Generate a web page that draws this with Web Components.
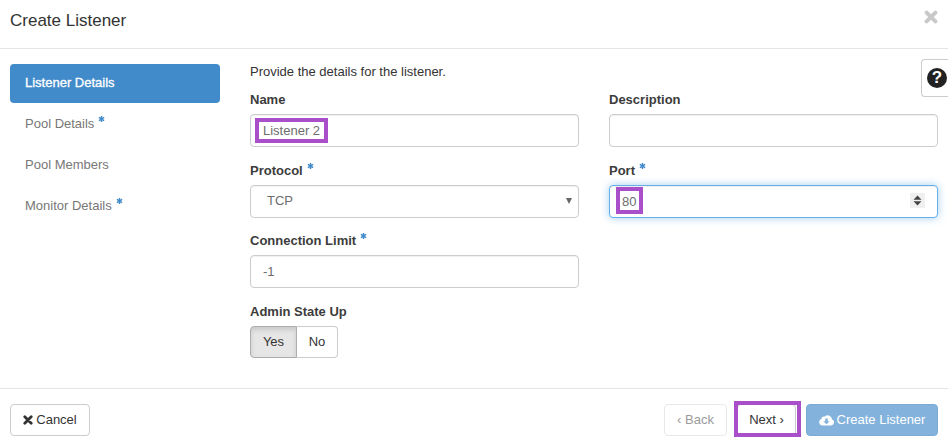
<!DOCTYPE html>
<html>
<head>
<meta charset="utf-8">
<title>Create Listener</title>
<style>
  html, body { margin: 0; padding: 0; background: #fff; }
  body { font: 13px/20px "Liberation Sans", Arial, sans-serif; color: #333; width: 948px; height: 443px; overflow: hidden; }
</style>
</head>
<body>
<template id="field-tpl">
  <style>
    :host { display: block; }
    .lbl { display: block; height: 20px; padding-top: 1px; margin-bottom: 4px; line-height: 20px; color: #3c3c3c; font-weight: 700; }
    .req { display: none; width: 7px; height: 8px; margin-left: 4px; vertical-align: 5px; }
    :host([required]) .req { display: inline-block; }
    .box {
      position: relative; box-sizing: border-box; height: 33px; border: 1px solid #ccc; border-radius: 4px;
      padding: 5px 12px; line-height: 21px; color: #6d6d6d; background: #fff;
      box-shadow: inset 0 1px 1px rgba(0,0,0,.06);
    }
    :host([select]) .box { padding-left: 16px; padding-top: 4px; }
    :host([focused]) .box { border-color: #66afe9; box-shadow: inset 0 1px 1px rgba(0,0,0,.075), 0 0 8px rgba(102,175,233,.6); }
  </style>
  <span class="lbl"><span id="t"></span><svg class="req" viewBox="0 0 8 8"><path d="M4 .5V7.500M1 2.200 7 5.800M7 2.200 1 5.800" stroke="#428bca" stroke-width="1.700" fill="none"/></svg></span>
  <div class="box"><slot></slot></div>
</template>

<template id="btn-tpl">
  <style>
    :host { display: inline-flex; box-sizing: border-box; height: 32px; align-items: center; justify-content: center; gap: 3px;
      border: 1px solid #ccc; border-radius: 4px; background: #fff; color: #333; white-space: nowrap; }
    :host([disabled]) { opacity: .65; color: #666; border-color: #ddd; }
    :host([primary]) { background: #428bca; border-color: #357ebd; color: #fff; opacity: .65; }
    ::slotted(svg) { display: block; flex: none; }
  </style>
  <slot></slot>
</template>

<template id="nav-tpl">
  <style>
    :host { display: block; width: 210px; flex: none; padding-top: 15px; }
  </style>
  <slot></slot>
</template>

<template id="tab-tpl">
  <style>
    :host { display: flex; align-items: center; box-sizing: border-box; height: 39px; padding-left: 15px; padding-bottom: 2px; border-radius: 4px; color: #777; margin-bottom: 2px; }
    :host([active]) { background: #428bca; color: #fff; -webkit-text-stroke: 0.3px #fff; }
    .req { display: none; width: 7px; height: 8px; margin-left: 4px; vertical-align: 5px; }
    :host([required]) .req { display: inline-block; }
  </style>
  <span><slot></slot><svg class="req" viewBox="0 0 8 8"><path d="M4 .5V7.500M1 2.200 7 5.800M7 2.200 1 5.800" stroke="#428bca" stroke-width="1.700" fill="none"/></svg></span>
</template>

<template id="toggle-tpl">
  <style>
    :host { display: block; }
    .lbl { display: block; height: 20px; padding-top: 1px; margin-bottom: 4px; line-height: 20px; color: #3c3c3c; font-weight: 700; }
    .group { display: inline-flex; height: 32px; }
    .opt { box-sizing: border-box; display: flex; align-items: center; justify-content: center; border: 1px solid #ccc; background: #fff; color: #333; }
    .on { width: 47px; background: #e6e6e6; border-color: #adadad; border-radius: 4px 0 0 4px; box-shadow: inset 0 3px 5px rgba(0,0,0,.125); }
    .off { width: 41px; border-left: 0; border-radius: 0 4px 4px 0; }
  </style>
  <span class="lbl">Admin State Up</span>
  <div class="group"><div class="opt on">Yes</div><div class="opt off">No</div></div>
</template>

<template id="dialog-tpl">
  <style>
    :host { display: block; position: relative; width: 948px; height: 443px; background: #fff; }
    header { box-sizing: border-box; height: 49px; border-bottom: 1px solid #e5e5e5; display: flex; justify-content: space-between; padding: 0 10px; }
    h4 { margin: 0; font-size: 17px; font-weight: 400; line-height: 41px; color: #333; }
    .close { margin-top: 10px; }
    main { box-sizing: border-box; height: 339px; display: flex; padding: 0 10px; gap: 30px; position: relative; }
    .body { flex: 1; }
    .intro { margin-top: 13px; height: 20px; line-height: 20px; color: #333; }
    .cols { display: grid; grid-template-columns: 329px 329px; grid-template-rows: 71px 70px 71px auto; column-gap: 30px; margin-top: 7px; }
    .help { position: absolute; left: 921px; top: 10px; width: 27px; height: 38px; box-sizing: border-box; border: 1px solid #ccc; border-right: 0; border-radius: 4px 0 0 4px; background: #fff; display: flex; align-items: center; padding-left: 5px; }
    .qm { width: 20px; height: 20px; border-radius: 50%; background: #222; color: #fff; font-weight: 700; font-size: 17px; line-height: 20px; text-align: center; flex: none; }
    footer { box-sizing: border-box; height: 55px; border-top: 1px solid #e5e5e5; padding: 15px 10px 0; display: flex; justify-content: space-between; }
    .right { display: flex; gap: 10px; }
    .mark { position: absolute; box-sizing: border-box; border: 4px solid #a94fc9; pointer-events: none; }
  </style>
  <header>
    <h4>Create Listener</h4>
    <svg class="close" width="14" height="14" viewBox="0 0 14 14"><path d="M2.600 2.600 11.400 11.400M11.400 2.600 2.600 11.400" stroke="#c9c9c9" stroke-width="4" stroke-linecap="round" fill="none"/></svg>
  </header>
  <main>
    <slot name="nav"></slot>
    <div class="body">
      <div class="intro"><slot name="intro"></slot></div>
      <div class="cols"><slot name="form"></slot></div>
    </div>
    <div class="help"><div class="qm">?</div></div>
  </main>
  <footer>
    <slot name="cancel"></slot>
    <div class="right"><slot name="actions"></slot></div>
  </footer>
  <div class="mark" style="left:255px;top:118px;width:73px;height:25px"></div>
  <div class="mark" style="left:616px;top:187px;width:27px;height:27px"></div>
  <div class="mark" style="left:734px;top:401px;width:67px;height:36px"></div>
</template>

<listener-dialog>
  <side-nav slot="nav">
    <side-tab active>Listener Details</side-tab>
    <side-tab required>Pool Details</side-tab>
    <side-tab>Pool Members</side-tab>
    <side-tab required>Monitor Details</side-tab>
  </side-nav>
  <span slot="intro">Provide the details for the listener.</span>
  <form-field slot="form" label="Name">Listener 2</form-field>
  <form-field slot="form" label="Description"></form-field>
  <form-field slot="form" label="Protocol" required select>TCP<svg width="6" height="6" viewBox="0 0 6 6" style="position:absolute;right:6px;top:12px"><path d="M0 0h6L3 6z" fill="#666"/></svg></form-field>
  <form-field slot="form" label="Port" required focused>80<svg width="15" height="15" viewBox="0 0 15 15" style="position:absolute;right:12px;top:7px"><rect width="15" height="15" fill="#f0f0f0"/><path d="M7.500 2.500 11.500 6.700H3.500zM7.500 12.500 3.500 8.300H11.500z" fill="#444"/></svg></form-field>
  <form-field slot="form" label="Connection Limit" required>-1</form-field>
  <div slot="form"></div>
  <state-toggle slot="form"></state-toggle>

  <action-btn slot="cancel" style="width:80px">
    <svg width="10" height="10" viewBox="0 0 10 10"><path d="M1.800 1.800 8.200 8.200M8.200 1.800 1.800 8.200" stroke="#333" stroke-width="2.800" stroke-linecap="round" fill="none"/></svg>
    <span>Cancel</span>
  </action-btn>
  <action-btn slot="actions" disabled style="width:63px"><span>‹ Back</span></action-btn>
  <action-btn slot="actions" style="width:59px"><span>Next ›</span></action-btn>
  <action-btn slot="actions" primary style="width:132px">
    <svg width="15" height="12" viewBox="0 0 15 12"><path fill-rule="evenodd" d="M3.600 11.500A3.300 3.300 0 0 1 2.400 5.100 2.500 2.500 0 0 1 5.800 2.600 4.200 4.200 0 0 1 13 5.500 3.100 3.100 0 0 1 11.800 11.500ZM6.200 4.500V7.200H4.300L7.500 10.300 10.700 7.200H8.800V4.500Z" fill="#fff"/></svg>
    <span>Create Listener</span>
  </action-btn>
</listener-dialog>

<script>
  function tpl(id) { return document.getElementById(id).content.cloneNode(true); }

  class ListenerDialog extends HTMLElement {
    constructor() { super(); this.attachShadow({ mode: 'open' }).appendChild(tpl('dialog-tpl')); }
  }
  class SideNav extends HTMLElement {
    constructor() { super(); this.attachShadow({ mode: 'open' }).appendChild(tpl('nav-tpl')); }
  }
  class SideTab extends HTMLElement {
    constructor() { super(); this.attachShadow({ mode: 'open' }).appendChild(tpl('tab-tpl')); }
  }
  class FormField extends HTMLElement {
    constructor() { super(); this.attachShadow({ mode: 'open' }).appendChild(tpl('field-tpl')); }
    connectedCallback() { this.shadowRoot.getElementById('t').textContent = this.getAttribute('label'); }
  }
  class StateToggle extends HTMLElement {
    constructor() { super(); this.attachShadow({ mode: 'open' }).appendChild(tpl('toggle-tpl')); }
  }
  class ActionBtn extends HTMLElement {
    constructor() { super(); this.attachShadow({ mode: 'open' }).appendChild(tpl('btn-tpl')); }
  }
  customElements.define('listener-dialog', ListenerDialog);
  customElements.define('side-nav', SideNav);
  customElements.define('side-tab', SideTab);
  customElements.define('form-field', FormField);
  customElements.define('state-toggle', StateToggle);
  customElements.define('action-btn', ActionBtn);
</script>
</body>
</html>
